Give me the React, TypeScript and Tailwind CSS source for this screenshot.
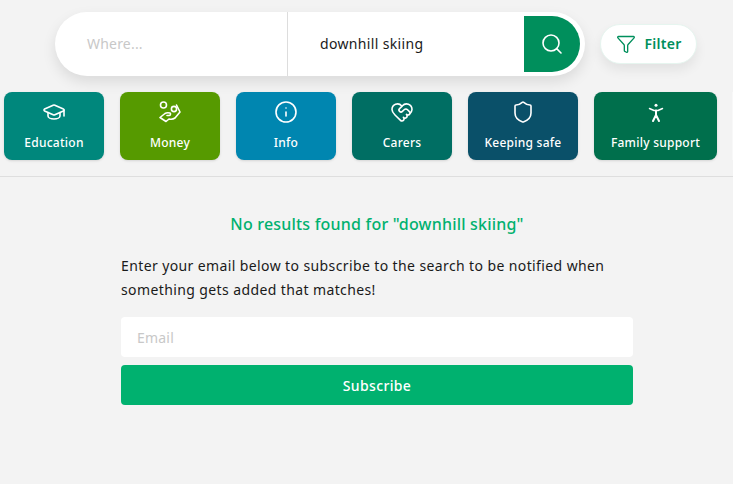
import React from 'react';
import { Filter, GraduationCap, HeartHandshake, Info, Search, Shield } from 'lucide-react';

const MoneyIcon = () => (
  <svg width="24" height="24" viewBox="0 0 24 24" fill="none" stroke="currentColor" strokeWidth="1.6" strokeLinecap="round" strokeLinejoin="round">
    <circle cx="5.500" cy="5" r="3" />
    <circle cx="16" cy="9" r="2.600" />
    <path d="M18.500 5l3.500 7-5 6c-2 1.500-4 1.500-6 1l-3 2.500-6-4 5-4c1.500-1 3-1 5-.5 1 .5.500 2.500-1 2.500h-2" />
  </svg>
);

const PersonIcon = () => (
  <svg width="18" height="20" viewBox="0 0 18 20" fill="none" stroke="currentColor" strokeWidth="1.500" strokeLinecap="round" strokeLinejoin="round" className="mt-[3px] mb-px">
    <circle cx="9" cy="2.200" r="1.500" fill="currentColor" stroke="none" />
    <path d="M2.500 5.500l4.500 2h4l4.500-2" />
    <path d="M9 7.500v4.500M9 12l-3 6M9 12l3 6" strokeWidth="2" />
  </svg>
);

const categories = [
  { name: 'Education', color: 'bg-[#00877c]', width: 'w-[100px]', icon: <GraduationCap size={24} strokeWidth={1.6} /> },
  { name: 'Money', color: 'bg-[#569a00]', width: 'w-[100px]', icon: <MoneyIcon /> },
  { name: 'Info', color: 'bg-[#0086b0]', width: 'w-[100px]', icon: <Info size={24} strokeWidth={1.6} /> },
  { name: 'Carers', color: 'bg-[#006e63]', width: 'w-[100px]', icon: <HeartHandshake size={24} strokeWidth={1.6} /> },
  { name: 'Keeping safe', color: 'bg-[#0a5069]', width: 'w-[110px]', icon: <Shield size={24} strokeWidth={1.6} /> },
  { name: 'Family support', color: 'bg-[#006f4c]', width: 'w-[123px]', icon: <PersonIcon /> },
];

const App: React.FC = () => {
  return (
    <div className="h-[484px] w-[733px] overflow-hidden bg-[#f3f3f3] font-['Noto_Sans',sans-serif]">
      {/* Search */}
      <div className="flex items-center pl-[55px] pt-3">
        <div className="flex h-16 w-[530px] items-center rounded-full bg-white shadow-[0_6px_14px_rgba(0,0,0,0.1)]">
          <div className="flex h-full w-[233px] items-center border-r border-[#dddddd] pl-8 text-sm tracking-[0.2px] text-[#c8c8c8]">
            Where...
          </div>
          <div className="flex-1 pl-8 text-sm tracking-[0.35px] text-[#1a1a1a]">downhill skiing</div>
          <div className="mr-[5px] flex h-14 w-14 items-center justify-center rounded-r-full bg-[#008f5c] text-white">
            <Search size={24} strokeWidth={1.6} />
          </div>
        </div>
        <div className="ml-[15px] flex h-10 w-[97px] items-center justify-center gap-2 rounded-full border border-[#e6f5ef] bg-white pl-px text-sm font-semibold tracking-[0.3px] text-[#008f5c] shadow-[0_6px_12px_rgba(0,0,0,0.07)]">
          <Filter size={20} strokeWidth={1.6} />
          Filter
        </div>
      </div>

      {/* Categories */}
      <div className="mt-4 flex h-[85px] gap-4 border-b border-[#dedede] pl-1">
        {categories.map(category => (
          <div
            key={category.name}
            className={`${category.color} ${category.width} flex h-[68px] shrink-0 flex-col items-center rounded-lg pt-2 text-white shadow-sm`}
          >
            {category.icon}
            <span className="mt-[11px] text-xs leading-4 font-medium tracking-[0.25px] whitespace-nowrap">{category.name}</span>
          </div>
        ))}
        <div className="-ml-px h-[68px] w-4 shrink-0 bg-[#f8f8f8]" />
      </div>

      {/* No results */}
      <div className="ml-[121px] w-[512px] pt-[35px]">
        <h2 className="text-center text-base leading-6 font-medium tracking-[0.2px] text-[#00b16f]">
          No results found for "downhill skiing"
        </h2>
        <p className="mt-[18px] text-sm leading-6 tracking-[0.39px] text-[#1a1a1a]">
          Enter your email below to subscribe to the search to be notified when something gets added that matches!
        </p>
        <input
          type="email"
          placeholder="Email"
          className="mt-[15px] block h-10 w-full rounded bg-white px-4 text-sm tracking-[0.2px] outline-none placeholder:text-[#c8c8c8]"
        />
        <button type="button" className="mt-2 block h-10 w-full rounded bg-[#00b16f] pt-px text-sm font-medium tracking-[0.35px] text-white">
          Subscribe
        </button>
      </div>
    </div>
  );
};

export default App;
